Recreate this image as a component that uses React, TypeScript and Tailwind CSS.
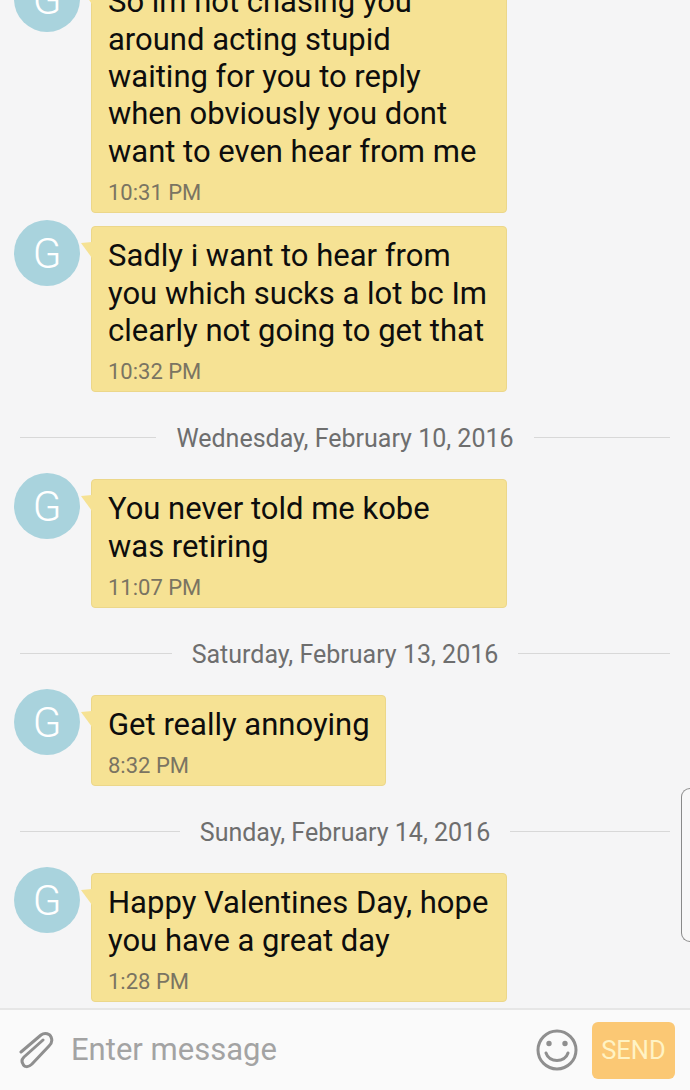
const font = { fontFamily: "Roboto, sans-serif" };

function Msg({ lines, time, w = "w-[416px]" }: { lines: string[]; time: string; w?: string }) {
  return (
    <div className="flex items-start pl-[14px]">
      <div className="w-[66px] h-[66px] mt-[-6px] rounded-full bg-[#a9d3dd] text-white flex items-center justify-center text-[42px] font-light shrink-0">
        G
      </div>
      <div className="relative ml-[11px]">
        <svg className="absolute left-[-10px] top-[16px]" width="11" height="16" viewBox="0 0 11 16">
          <path d="M0 1 L11 0 L11 16 Z" fill="#f6e294" />
        </svg>
        <div className={`${w} bg-[#f6e294] rounded-[4px] border border-[#ecd78a] pl-[16px] pt-[10px] pb-[6px]`}>
          <div className="text-[31px] leading-[37.33px] text-[#0d0d0d] whitespace-nowrap">
            {lines.map((l) => (
              <div key={l}>{l}</div>
            ))}
          </div>
          <div className="text-[22px] leading-[26px] text-[#7a7462] mt-[10px]">{time}</div>
        </div>
      </div>
    </div>
  );
}

function DateRow({ text }: { text: string }) {
  return (
    <div className="flex items-center gap-[20px] px-[20px] h-[30px] mt-[30px] mb-[27px]">
      <div className="flex-1 h-px bg-[#d8d8d8]" />
      <div className="text-[25px] leading-[30px] mt-[4px] text-[#6e6e6e] whitespace-nowrap">{text}</div>
      <div className="flex-1 h-px bg-[#d8d8d8]" />
    </div>
  );
}

export default function App() {
  return (
    <div className="relative w-[690px] h-[1090px] overflow-hidden bg-[#f5f5f6] flex flex-col" style={font}>
      <div className="h-[1008px] overflow-hidden flex flex-col justify-end pb-[6px]">
        <Msg
          lines={["So im not chasing you", "around acting stupid", "waiting for you to reply", "when obviously you dont", "want to even hear from me"]}
          time="10:31 PM"
        />
        <div className="h-[13.5px] shrink-0" />
        <Msg lines={["Sadly i want to hear from", "you which sucks a lot bc Im", "clearly not going to get that"]} time="10:32 PM" />
        <DateRow text="Wednesday, February 10, 2016" />
        <Msg lines={["You never told me kobe", "was retiring"]} time="11:07 PM" />
        <DateRow text="Saturday, February 13, 2016" />
        <Msg lines={["Get really annoying"]} time="8:32 PM" w="w-[295px]" />
        <DateRow text="Sunday, February 14, 2016" />
        <Msg lines={["Happy Valentines Day, hope", "you have a great day"]} time="1:28 PM" />
      </div>
      <div className="flex-1 bg-[#fafafa] border-t-2 border-[#e6e6e6] flex items-center pl-[18px] pr-[15px]">
        <svg width="36" height="38" viewBox="0 0 36 38" fill="none" stroke="#8f8f8f" strokeWidth="3" strokeLinecap="round" strokeLinejoin="round">
          <path d="M3 21 L23 4 C27 1 32 3 33 6 C35 10 33 13 31 15 L14 33 C10 37 6 36 5 33 C3 30 4 28 6 26 L25 9" />
        </svg>
        <div className="ml-[17px] flex-1 text-[31px] text-[#a3a3a3]">Enter message</div>
        <svg width="42" height="42" viewBox="0 0 42 42" fill="none" stroke="#8f8f8f" strokeWidth="3" strokeLinecap="round">
          <circle cx="21" cy="21" r="19" />
          <path d="M10 24 C13 34 29 34 32 24" />
          <circle cx="13" cy="14.5" r="1.2" fill="#8f8f8f" />
          <circle cx="29" cy="14.5" r="1.2" fill="#8f8f8f" />
        </svg>
        <div className="ml-[14px] w-[83px] h-[57px] rounded-[6px] bg-[#fbc874] text-[#fff3c4] text-[25.5px] flex items-center justify-center">
          SEND
        </div>
      </div>
      <div className="absolute right-0 top-[788px] w-[9px] h-[154px] bg-[#f8f8f8] border border-r-0 border-[#8a8a8a] rounded-l-[10px]" />
    </div>
  );
}
